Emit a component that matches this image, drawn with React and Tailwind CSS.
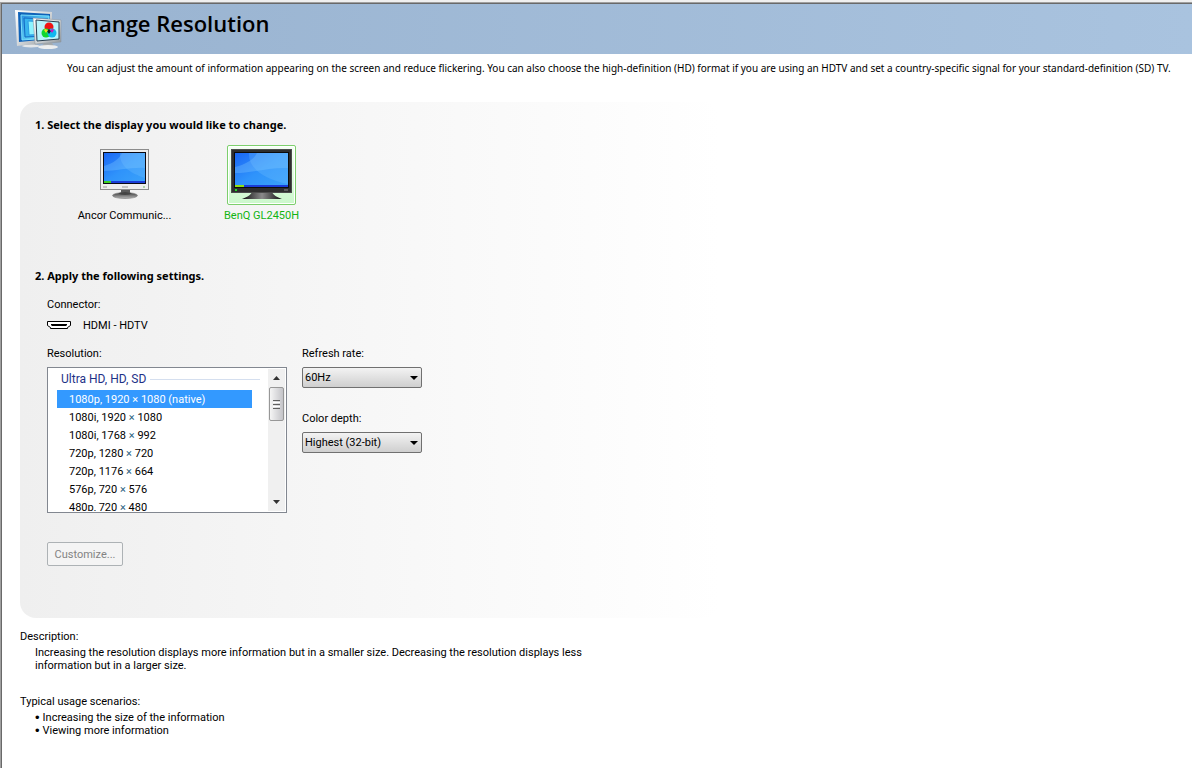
import React, { useState } from 'react';

const displays = [
    { id: 'ancor', name: 'Ancor Communic...', Icon: DeskMonitor },
    { id: 'benq', name: 'BenQ GL2450H', Icon: TvMonitor },
];

const resolutions = [
    { label: '1080p', width: 1920, height: 1080, note: '(native)' },
    { label: '1080i', width: 1920, height: 1080 },
    { label: '1080i', width: 1768, height: 992 },
    { label: '720p', width: 1280, height: 720 },
    { label: '720p', width: 1176, height: 664 },
    { label: '576p', width: 720, height: 576 },
    { label: '480p', width: 720, height: 480 },
];

const scenarios = ['Increasing the size of the information', 'Viewing more information'];

function HeaderIcon() {
    return (
        <svg width="48" height="40" viewBox="0 0 48 40" aria-hidden="true">
            <defs>
                <linearGradient id="hdFrame" x1="0" y1="0" x2="1" y2="1">
                    <stop offset="0" stopColor="#ffffff" />
                    <stop offset=".5" stopColor="#d4d8db" />
                    <stop offset="1" stopColor="#8d9499" />
                </linearGradient>
                <linearGradient id="hdScreen" x1="0" y1="0" x2="1" y2="1">
                    <stop offset="0" stopColor="#2a8fe0" />
                    <stop offset="1" stopColor="#7df6ff" />
                </linearGradient>
            </defs>
            <path d="M13 33h8l1 3H11z" fill="#b4b9bc" />
            <ellipse cx="16" cy="36" rx="9" ry="1.500" fill="#e4e7e9" />
            <path d="M0 0l37 2v30L2 36z" fill="url(#hdFrame)" />
            <path d="M3 2l32 2v25L4 32z" fill="#0f62b8" />
            <path d="M6 5l28 1v22L7 30z" fill="url(#hdScreen)" stroke="#7ce0fc" />
            <path d="M9 8l24 1v17L10 27z" fill="#38b4ee" stroke="#1468c4" />
            <path d="M13 11l19 1v12l-18 1z" fill="#8cf4ff" stroke="#2c9ce4" />
            <path d="M29 33h8l2 3H27z" fill="#a6abae" />
            <ellipse cx="33" cy="37" rx="10" ry="2" fill="#eceeef" />
            <path d="M18 8l28 2v22l-26 2z" fill="url(#hdFrame)" stroke="#8b9298" strokeWidth=".5" />
            <path d="M21 10l23 2v17l-22 2z" fill="#b8f4fc" stroke="#2a4052" />
            <circle cx="34" cy="17" r="4.500" fill="#f01414" />
            <circle cx="31" cy="23" r="4.500" fill="#10d830" />
            <circle cx="37" cy="23" r="4.500" fill="#10b8f0" />
            <path d="M34 19l2 2-2 3-2-3z" fill="#15202c" />
            <path d="M35 20l3-1 1 1-2 3z" fill="#c818c0" />
            <path d="M33 20l-3-1-1 1 2 3z" fill="#f0e018" />
        </svg>
    );
}

function DeskMonitor() {
    return (
        <svg width="50" height="52" viewBox="0 0 50 52" aria-hidden="true">
            <defs>
                <linearGradient id="deskScreen" x1="0" y1="0" x2="1" y2="1">
                    <stop offset="0" stopColor="#1a66f4" />
                    <stop offset=".5" stopColor="#2f93fb" />
                    <stop offset="1" stopColor="#3aa2fa" />
                </linearGradient>
                <linearGradient id="deskFoot" x1="0" y1="0" x2="0" y2="1">
                    <stop offset="0" stopColor="#3a3a3a" />
                    <stop offset="1" stopColor="#b8b8b8" />
                </linearGradient>
            </defs>
            <path d="M21 41h9v4h-9z" fill="#5a5a5a" />
            <ellipse cx="25" cy="46.500" rx="12.500" ry="3" fill="url(#deskFoot)" stroke="#7a7a7a" strokeWidth=".6" />
            <ellipse cx="25" cy="44.500" rx="6" ry="1.500" fill="#444444" />
            <rect x=".5" y=".5" width="48" height="40" fill="#eeeeee" stroke="#8c8c8c" />
            <rect x="3" y="3" width="43" height="32" fill="#0a0a14" />
            <rect x="4" y="4" width="41" height="30" fill="url(#deskScreen)" />
            <path d="M4 17C14 14 20 9 22 4h23v15C32 18 16 22 4 22z" fill="#8cd0ff" opacity=".3" />
            <path d="M20 4c-1 12 9 20 25 25V4z" fill="#7cc8ff" opacity=".25" />
            <rect x="4" y="32" width="41" height="2" fill="#1a3cd8" />
            <rect x="4" y="32" width="7" height="2" fill="#3fd020" />
            <path d="M3 38h4M22 38h6" stroke="#9a9a9a" />
            <circle cx="44" cy="38" r="1" fill="#9ac890" />
        </svg>
    );
}

function TvMonitor() {
    return (
        <svg width="62" height="52" viewBox="0 0 62 52" aria-hidden="true">
            <defs>
                <linearGradient id="tvScreen" x1="0" y1="0" x2="1" y2="1">
                    <stop offset="0" stopColor="#1a66f4" />
                    <stop offset=".5" stopColor="#2f93fb" />
                    <stop offset="1" stopColor="#3aa2fa" />
                </linearGradient>
                <linearGradient id="tvFoot" x1="0" y1="0" x2="1" y2="0">
                    <stop offset="0" stopColor="#111111" />
                    <stop offset=".5" stopColor="#8a8a8a" />
                    <stop offset="1" stopColor="#111111" />
                </linearGradient>
            </defs>
            <path d="M21 43h20c1 3 5 5 10 7H11c5-2 9-4 10-7z" fill="url(#tvFoot)" />
            <rect x="0" y="0" width="61" height="44" fill="#2e2e2e" />
            <rect x=".5" y=".5" width="60" height="43" fill="none" stroke="#4c4c4c" />
            <rect x="3" y="3" width="55" height="36" fill="#0c0c0c" />
            <rect x="4" y="4" width="53" height="34" fill="url(#tvScreen)" />
            <path d="M4 18C16 15 23 10 26 4h31v15C40 18 20 24 4 24z" fill="#8cd0ff" opacity=".3" />
            <path d="M18 4c-1 14 12 25 39 31V4z" fill="#7cc8ff" opacity=".25" />
            <rect x="4" y="36" width="53" height="2" fill="#1a3cd8" />
            <rect x="4" y="36" width="9" height="2" fill="#8fe010" />
            <rect x="4" y="40" width="2" height="2" fill="#22d822" />
            <path d="M53 41h4" stroke="#8a8a8a" />
        </svg>
    );
}

function HdmiIcon() {
    return (
        <svg width="24" height="9" viewBox="0 0 24 9" aria-hidden="true">
            <path d="M.5.5h23v4l-3 2v1h-17v-1l-3-2z" fill="#ffffff" stroke="#000000" />
            <path d="M4 3h16v1l-1 1H5L4 4z" fill="#000000" />
        </svg>
    );
}

function Arrow({ up = false }) {
    return (
        <svg width="7" height="4" viewBox="0 0 7 4" className={up ? 'rotate-180' : ''} aria-hidden="true">
            <path d="M0 0h7L3.500 4z" fill="#333333" />
        </svg>
    );
}

function SelectField({ id, label, options }) {
    return (
        <div>
            <label htmlFor={id} className="block">{label}</label>
            <div className="relative mt-[7px] w-[120px]">
                <select
                    id={id}
                    className="block h-[21px] w-full appearance-none rounded-xs border border-[#707070] bg-linear-to-b from-[#f3f3f3] to-[#cfcfcf] pl-[2px] pr-5 text-black"
                >
                    {options.map((option) => (
                        <option key={option}>{option}</option>
                    ))}
                </select>
                <svg
                    width="8"
                    height="4"
                    viewBox="0 0 8 4"
                    className="pointer-events-none absolute right-1 top-[9px]"
                    aria-hidden="true"
                >
                    <path d="M0 0h8L4 4z" fill="#000000" />
                </svg>
            </div>
        </div>
    );
}

function ResolutionList() {
    const [selected, setSelected] = useState(0);
    return (
        <div className="mt-[7px] flex h-[146px] w-60 border border-[#828790] bg-white p-px">
            <div className="min-w-0 flex-1 overflow-hidden pl-2">
                <div className="flex h-[21px] items-center gap-1 pl-1 pr-2 text-[12px] text-[#1e3287]">
                    <span id="res-group">Ultra HD, HD, SD</span>
                    <span className="h-px flex-1 bg-[#d5dfef]" />
                </div>
                <ul role="listbox" aria-labelledby="res-group" className="mr-4">
                    {resolutions.map((res, i) => (
                        <li
                            key={i}
                            role="option"
                            aria-selected={i === selected}
                            onClick={() => setSelected(i)}
                            className={`h-[18px] pl-3 leading-[19px] ${i === selected ? 'bg-[#3399ff] text-white' : ''}`}
                        >
                            {res.label}, {res.width}{' '}
                            <span className={i === selected ? '' : 'text-[#2a5f80]'}>×</span>{' '}
                            {res.height} {res.note}
                        </li>
                    ))}
                </ul>
            </div>
            <div className="flex w-[17px] flex-col bg-[#f0f0f0]">
                <button type="button" aria-label="Scroll up" className="flex h-[18px] items-center justify-center">
                    <Arrow up />
                </button>
                <div className="mx-px flex h-[34px] flex-col items-center justify-center gap-px rounded-xs border border-[#979797] bg-linear-to-r from-[#f5f5f5] to-[#c4c4c8]">
                    <span className="h-px w-[7px] bg-[#606060]" />
                    <span className="h-px w-[7px] bg-white" />
                    <span className="h-px w-[7px] bg-[#606060]" />
                    <span className="h-px w-[7px] bg-white" />
                    <span className="h-px w-[7px] bg-[#606060]" />
                </div>
                <button type="button" aria-label="Scroll down" className="mt-auto flex h-[18px] items-center justify-center">
                    <Arrow />
                </button>
            </div>
        </div>
    );
}

export default function App() {
    const [active, setActive] = useState('benq');

    return (
        <div className="min-h-screen border-t-2 border-[#f0f0f0] bg-white font-[Roboto,sans-serif] text-[11px] leading-[13px] text-black">
            <div className="min-h-[766px] border-l border-t border-[#a0a0a0]">
                <div className="min-h-[765px] border-l border-t border-[#696969]">
                    <header className="flex h-[50px] items-start gap-2 bg-linear-to-r from-[#99b3d0] to-[#a9c3df] pl-[13px] pt-[6px]">
                        <HeaderIcon />
                        <h1 className="font-['Open_Sans',sans-serif] text-[22px] font-semibold leading-[26px]">Change Resolution</h1>
                    </header>

                    <p className="pl-[65px] pr-2 pt-2 font-['Noto_Sans',sans-serif] text-[10px] leading-[13px]">
                        You can adjust the amount of information appearing on the screen and reduce flickering. You can also choose the
                        high-definition (HD) format if you are using an HDTV and set a country-specific signal for your standard-definition (SD) TV.
                    </p>

                    <main className="pl-[18px]">
                        <div className="mt-[27px] max-w-[700px] rounded-[16px] bg-linear-to-r from-[#efefef] to-white pb-[52px] pl-[15px] pt-4">
                            <h2 className="font-['Noto_Sans',sans-serif] font-bold">1. Select the display you would like to change.</h2>
                            <div className="mt-[14px] flex pl-[21px]">
                                {displays.map(({ id, name, Icon }) => (
                                    <button
                                        key={id}
                                        type="button"
                                        aria-pressed={active === id}
                                        onClick={() => setActive(id)}
                                        className={`flex w-[137px] flex-col items-center gap-1 ${active === id ? 'text-[#12b412]' : ''}`}
                                    >
                                        <span
                                            className={`flex h-[60px] w-[69px] items-center justify-center rounded-xs border ${
                                                active === id ? 'border-[#7ccf6c] bg-linear-to-b from-[#f4fff4] to-[#ccf8cc] inset-ring inset-ring-white' : 'border-transparent'
                                            }`}
                                        >
                                            <Icon />
                                        </span>
                                        <span>{name}</span>
                                    </button>
                                ))}
                            </div>

                            <h2 className="mt-[47px] font-['Noto_Sans',sans-serif] font-bold">2. Apply the following settings.</h2>
                            <div className="pl-3 pt-4">
                                <div>Connector:</div>
                                <div className="mt-2 flex items-center gap-3">
                                    <HdmiIcon />
                                    <span>HDMI - HDTV</span>
                                </div>
                                <div className="mt-[15px] flex gap-[15px]">
                                    <div>
                                        <div>Resolution:</div>
                                        <ResolutionList />
                                    </div>
                                    <div className="flex flex-col gap-6">
                                        <SelectField id="refresh" label="Refresh rate:" options={['60Hz', '59Hz', '50Hz']} />
                                        <SelectField id="depth" label="Color depth:" options={['Highest (32-bit)', 'Medium (16-bit)']} />
                                    </div>
                                </div>
                                <button
                                    type="button"
                                    disabled
                                    className="mt-[29px] h-6 w-[76px] rounded-xs border border-[#adb2b5] bg-[#f4f4f4] text-[#838383]"
                                >
                                    Customize...
                                </button>
                            </div>
                        </div>

                        <section className="mt-3 max-w-[570px]">
                            <h3>Description:</h3>
                            <p className="mt-[3px] pl-[15px]">
                                Increasing the resolution displays more information but in a smaller size. Decreasing the resolution displays less
                                information but in a larger size.
                            </p>
                        </section>
                        <section className="mt-[23px]">
                            <h3>Typical usage scenarios:</h3>
                            <ul className="mt-[3px] pl-[15px]">
                                {scenarios.map((text) => (
                                    <li key={text} className="flex gap-[3px]">
                                        <span className="font-['Liberation_Sans',sans-serif] text-[13px]">•</span>
                                        <span>{text}</span>
                                    </li>
                                ))}
                            </ul>
                        </section>
                    </main>
                </div>
            </div>
        </div>
    );
}
